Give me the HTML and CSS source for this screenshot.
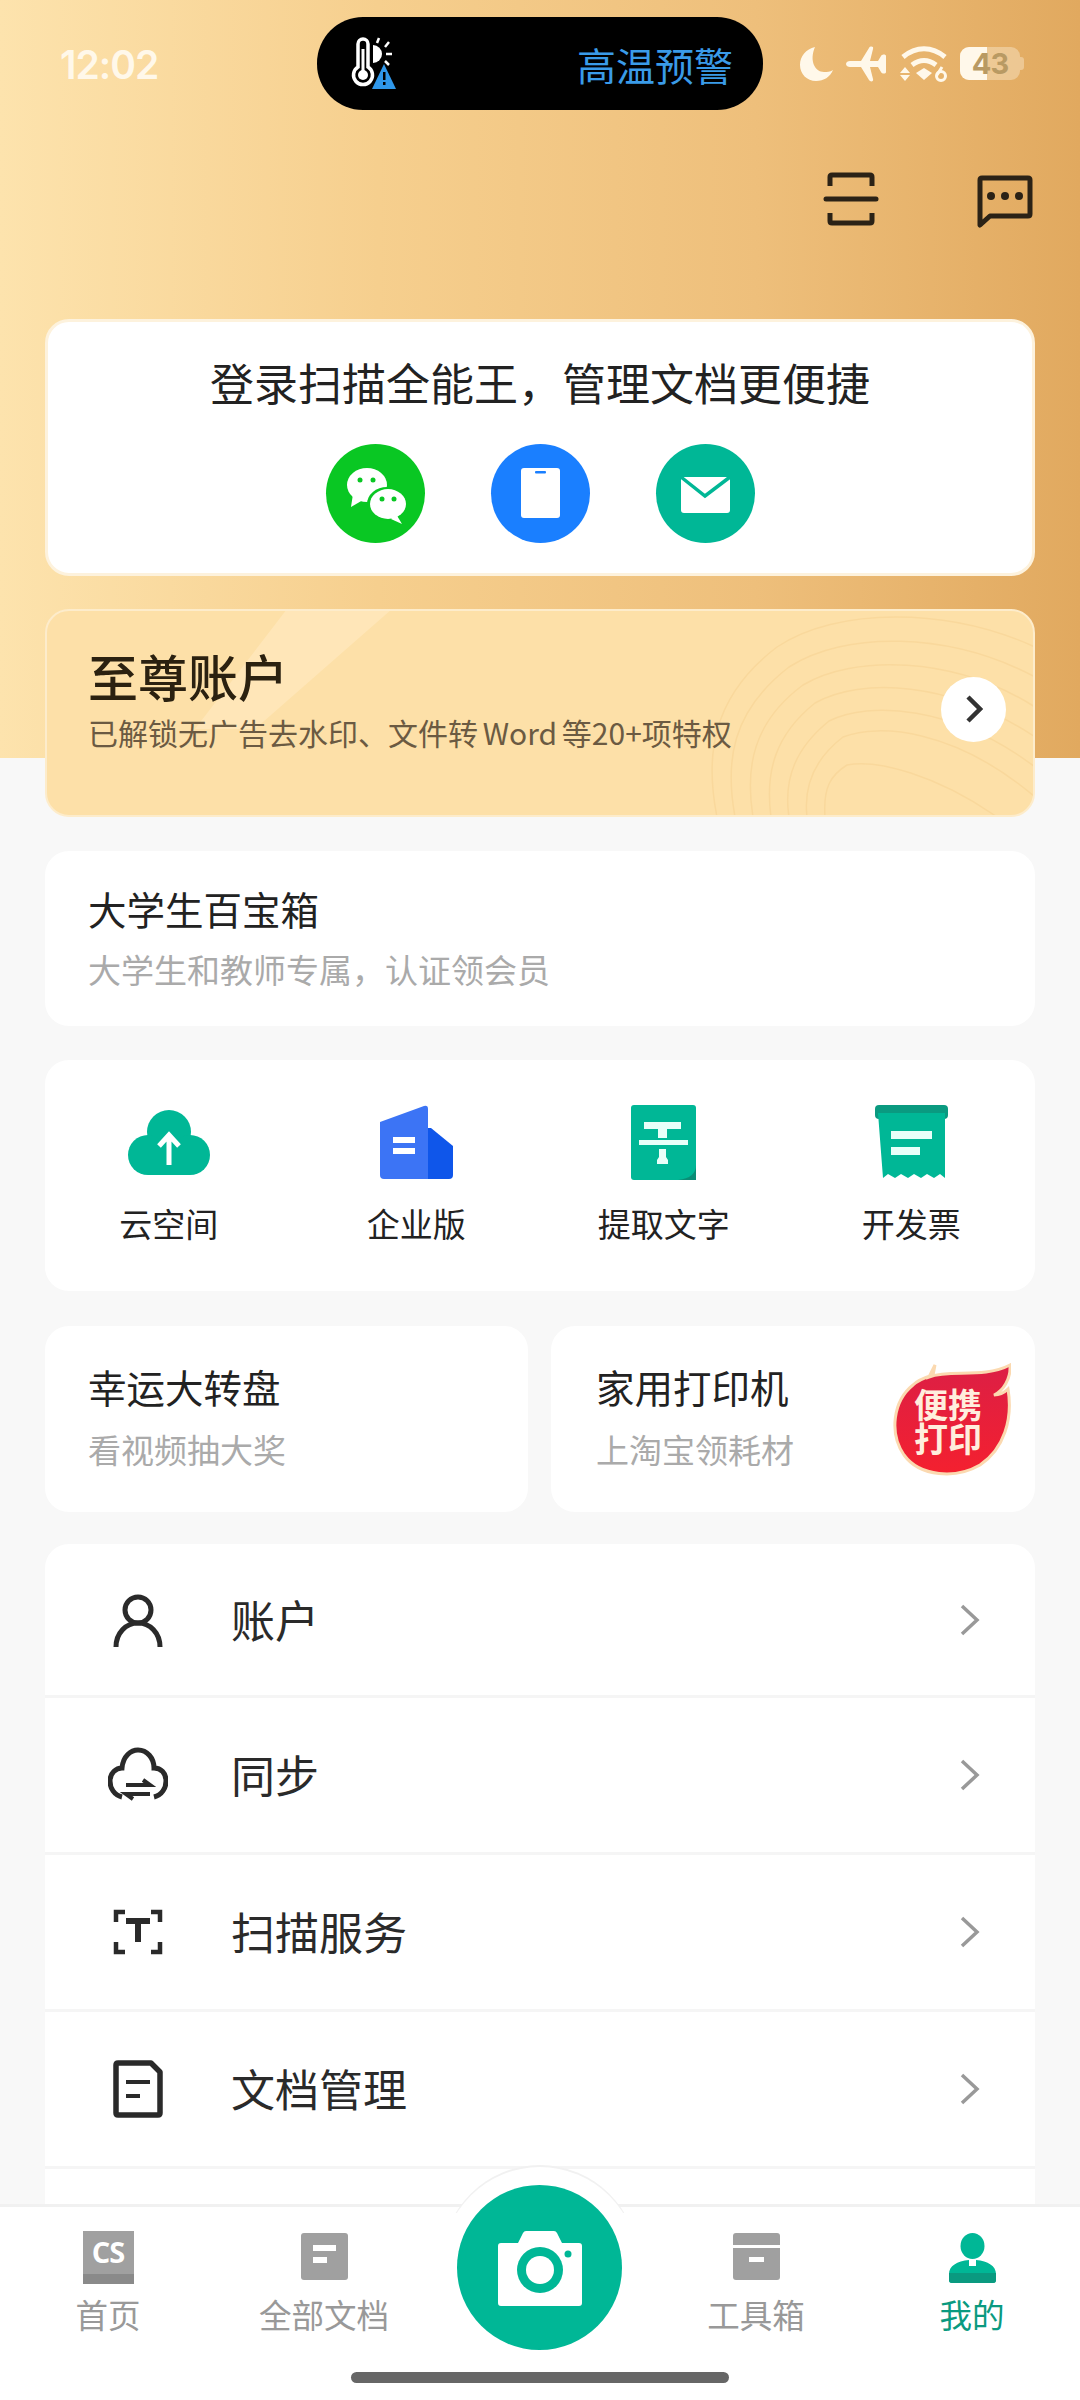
FILE: index.html
```html
<!DOCTYPE html>
<html lang="zh-CN">
<head>
<meta charset="UTF-8">
<title>扫描全能王</title>
<link rel="stylesheet" href="styles.css">
</head>
<body>
<div class="page">

  <div class="status">
    <span class="time">12:02</span>
    <div class="pill">
      <svg class="pill-icon" width="46" height="54" viewBox="0 0 46 54">
        <path d="M7 30V7a5 5 0 0 1 10 0v23a9.500 9.500 0 1 1-10 0z" fill="none" stroke="#fff" stroke-width="3.500"/>
        <circle cx="12" cy="38" r="5" fill="#fff"/>
        <rect x="10.500" y="12" width="3" height="24" fill="#fff"/>
        <path d="M22 8a9 9 0 0 1 0 18z" fill="#fff"/>
        <path d="M28 1l-2 5M38 5l-4 5M41 17h-6M38 28l-4-4" stroke="#fff" stroke-width="2.500" fill="none"/>
        <path d="M33 27l12 25H21z" fill="#2f97ea"/>
        <rect x="32" y="35" width="2.500" height="8" fill="#000"/>
        <rect x="32" y="45" width="2.500" height="3" fill="#000"/>
      </svg>
      <span class="pill-text">高温预警</span>
    </div>
    <div class="status-icons">
      <svg width="34" height="36" viewBox="0 0 34 36"><path d="M15 1C6 3 0 10 0 19c0 9 7 16 16 16 8 0 14-4 17-11-3 2-6 2-9 2C15 26 9 15 15 1z" fill="#fff8ea"/></svg>
      <svg width="42" height="36" viewBox="0 0 42 36"><path d="M0 18c0-2 2-3 4-3h11l8-13c1-2 5-2 4 1l-3 12h8l3-5c1-2 5-2 5 0v16c0 2-4 2-5 0l-3-5h-8l3 12c1 3-3 3-4 1l-8-13H4c-2 0-4-1-4-3z" fill="#fff8ea"/></svg>
      <svg width="48" height="36" viewBox="0 0 48 36">
        <path d="M3 11C16 0 32 0 45 11M12 19c8-6 16-6 24 0" fill="none" stroke="#fff8ea" stroke-width="5"/>
        <path d="M24 22l8 5-8 7-8-7z" fill="#fff8ea"/>
        <path d="M5 21l5 6H0zM0 29h10l-5 6z" fill="#fff8ea"/>
        <circle cx="41" cy="30" r="4.500" fill="none" stroke="#fff8ea" stroke-width="3"/>
        <path d="M37 29l5-8" stroke="#fff8ea" stroke-width="3"/>
      </svg>
      <div class="battery"><span class="battery-fill"></span><span class="battery-num">43</span></div>
    </div>
  </div>

  <div class="topbar">
    <svg width="56" height="54" viewBox="0 0 56 54" fill="none" stroke="#2b2216" stroke-width="5">
      <path d="M7 14V5q0-2 2-2h38q2 0 2 2v9"/>
      <path d="M3 27h50" stroke-linecap="round"/>
      <path d="M7 41v8q0 2 2 2h38q2 0 2-2v-8"/>
    </svg>
    <svg class="msg-icon" width="56" height="54" viewBox="0 0 56 54">
      <path d="M3 50V5q0-2 2-2h46q2 0 2 2v34q0 2-2 2H13z" fill="none" stroke="#2b2216" stroke-width="5" stroke-linejoin="round"/>
      <circle cx="14" cy="21" r="4" fill="#2b2216"/>
      <circle cx="28" cy="21" r="4" fill="#2b2216"/>
      <circle cx="42" cy="21" r="4" fill="#2b2216"/>
    </svg>
  </div>

  <div class="login card">
    <div class="login-title">登录扫描全能王，管理文档更便捷</div>
    <div class="login-ways">
      <div class="way way-wechat">
        <svg width="99" height="99" viewBox="0 0 99 99">
          <ellipse cx="41" cy="41" rx="20" ry="17" fill="#fff"/>
          <path d="M27 50l-2 13 12-7z" fill="#fff"/>
          <ellipse cx="61" cy="60" rx="20" ry="17" fill="#09c723"/>
          <ellipse cx="62" cy="60" rx="18" ry="15" fill="#fff"/>
          <path d="M70 70l6 10-11-5z" fill="#fff"/>
          <circle cx="34" cy="36" r="2.500" fill="#09c723"/>
          <circle cx="47" cy="36" r="2.500" fill="#09c723"/>
          <circle cx="56" cy="55" r="2.500" fill="#09c723"/>
          <circle cx="68" cy="55" r="2.500" fill="#09c723"/>
        </svg>
      </div>
      <div class="way way-phone">
        <svg width="99" height="99" viewBox="0 0 99 99">
          <rect x="30" y="24" width="39" height="50" rx="3" fill="#fff"/>
          <rect x="44" y="27" width="11" height="2.500" rx="1" fill="#1a7fff"/>
        </svg>
      </div>
      <div class="way way-mail">
        <svg width="99" height="99" viewBox="0 0 99 99">
          <rect x="25" y="33" width="49" height="36" rx="3" fill="#fff"/>
          <path d="M25 33l24 19 25-19" fill="none" stroke="#00b796" stroke-width="3.500"/>
        </svg>
      </div>
    </div>
  </div>

  <div class="premium card">
    <svg class="premium-art" width="990" height="208" viewBox="0 0 990 208" fill="none">
      <path d="M242 0h105L210 120H150z" fill="#ffe6b8"/>
      <g stroke="#f9d89c" stroke-width="1.500">
        <path d="M672 208c-12-60-6-120 60-170 60-40 170-40 258 0"/>
        <path d="M690 208c-10-55-4-105 54-150 55-36 160-36 246 10"/>
        <path d="M708 208c-8-50 0-95 50-132 50-30 150-30 232 22"/>
        <path d="M726 208c-6-45 4-82 44-114 46-26 136-22 220 34"/>
        <path d="M744 208c-6-40 8-70 40-96 40-20 124-16 206 46"/>
        <path d="M762 208c-4-35 10-60 36-80 36-14 112-8 192 60"/>
        <path d="M780 208c-2-30 6-42 22-52 30-6 90 10 150 52"/>
      </g>
    </svg>
    <div class="premium-text">
      <div class="premium-title">至尊账户</div>
      <div class="premium-sub">已解锁无广告去水印、文件转 Word 等20+项特权</div>
    </div>
    <div class="premium-go">
      <svg width="18" height="30" viewBox="0 0 18 30"><path d="M3 3l12 12L3 27" fill="none" stroke="#333" stroke-width="4.500"/></svg>
    </div>
  </div>

  <div class="student card">
    <div class="name">大学生百宝箱</div>
    <div class="hint">大学生和教师专属，认证领会员</div>
  </div>

  <div class="tools card">
    <div class="tool">
      <svg width="84" height="75" viewBox="0 0 84 75">
        <circle cx="42" cy="27" r="22" fill="#00b796"/>
        <circle cx="21" cy="50" r="20" fill="#00b796"/>
        <circle cx="63" cy="50" r="20" fill="#00b796"/>
        <rect x="21" y="40" width="42" height="30" fill="#00b796"/>
        <path d="M42 60V31M32 41l10-11 10 11" fill="none" stroke="#fff" stroke-width="5"/>
      </svg>
      <span class="tool-name">云空间</span>
    </div>
    <div class="tool">
      <svg width="73" height="75" viewBox="0 0 73 75">
        <path d="M48 74V23h3l22 18v29q0 4-4 4z" fill="#0f56ea"/>
        <path d="M0 17L44 1q4-1 4 3v70H4q-4 0-4-4z" fill="#3c74f5"/>
        <rect x="13" y="32" width="22" height="6" fill="#fff"/>
        <rect x="13" y="43" width="22" height="6" fill="#fff"/>
      </svg>
      <span class="tool-name">企业版</span>
    </div>
    <div class="tool">
      <svg width="65" height="75" viewBox="0 0 65 75">
        <path d="M3 0h59q3 0 3 3v72H3q-3 0-3-3V3q0-3 3-3z" fill="#00b796"/>
        <path d="M65 60v15H47q18-2 18-15z" fill="#0a8d76"/>
        <path d="M13 17h37v7H36v9h-9v-9H13z" fill="#e8fff9"/>
        <rect x="8" y="35" width="49" height="5" fill="#e8fff9"/>
        <path d="M28 44h7v8l2 3v4H26v-4l2-3z" fill="#e8fff9"/>
      </svg>
      <span class="tool-name">提取文字</span>
    </div>
    <div class="tool">
      <svg width="73" height="75" viewBox="0 0 73 75">
        <rect x="0" y="0" width="73" height="14" rx="4" fill="#0a9a80"/>
        <path d="M3 8h67v65l-5-4-6 4-7-4-6 4-7-4-6 4-7-4-6 4-7-4-5 4z" fill="#00b796"/>
        <rect x="16" y="26" width="41" height="8" fill="#e8fff9"/>
        <rect x="16" y="42" width="29" height="8" fill="#e8fff9"/>
      </svg>
      <span class="tool-name">开发票</span>
    </div>
  </div>

  <div class="promo-row">
    <div class="promo promo-left card">
      <div class="name">幸运大转盘</div>
      <div class="hint">看视频抽大奖</div>
    </div>
    <div class="promo card">
      <div class="name">家用打印机</div>
      <div class="hint">上淘宝领耗材</div>
      <div class="flame">
        <svg width="118" height="114" viewBox="0 0 118 114">
          <defs>
            <linearGradient id="flameRed" x1="0" y1="0" x2="0" y2="1">
              <stop offset="0" stop-color="#dc1f45"/>
              <stop offset="1" stop-color="#f4202f"/>
            </linearGradient>
          </defs>
          <path d="M42 2L36 14C58 6 90 16 117 2c1 14-7 26-16 30 6 0 10-2 14-6 5 30-4 60-28 76-24 14-60 12-76-10C-4 70 0 38 20 22c6-6 14-8 20-10z" fill="url(#flameRed)" stroke="#fbd9b0" stroke-width="3"/>
        </svg>
        <span class="flame-text">便携<br>打印</span>
      </div>
    </div>
  </div>

  <div class="menu card">
    <div class="menu-row">
      <svg class="menu-icon" width="60" height="60" viewBox="0 0 60 60" fill="none" stroke="#2a2a2a" stroke-width="5">
        <circle cx="30" cy="20" r="13"/>
        <path d="M8 57C8 43 18 33 30 33s22 10 22 24"/>
      </svg>
      <span class="menu-name">账户</span>
      <svg class="menu-go" width="22" height="34" viewBox="0 0 22 34"><path d="M3 3l15 14L3 31" fill="none" stroke="#999" stroke-width="3.500"/></svg>
    </div>
    <div class="menu-row">
      <svg class="menu-icon" width="60" height="60" viewBox="0 0 60 60" fill="none" stroke="#2a2a2a" stroke-width="5">
        <path d="M14 52C6 50 2 43 2 36c0-8 6-13 12-13C15 11 23 5 30 5c9 0 16 8 16 18 7 0 12 5 12 13 0 7-4 14-12 16"/>
        <path d="M18 40h24l-7-5M42 49H18l7 5" stroke-width="4"/>
      </svg>
      <span class="menu-name">同步</span>
      <svg class="menu-go" width="22" height="34" viewBox="0 0 22 34"><path d="M3 3l15 14L3 31" fill="none" stroke="#999" stroke-width="3.500"/></svg>
    </div>
    <div class="menu-row">
      <svg class="menu-icon" width="60" height="60" viewBox="0 0 60 60" fill="none" stroke="#2a2a2a" stroke-width="4.500">
        <path d="M17 10H8v10M43 10h9v10M17 50H8V40M43 50h9V40"/>
        <path d="M18 19h24M30 19v21" stroke-width="6"/>
      </svg>
      <span class="menu-name">扫描服务</span>
      <svg class="menu-go" width="22" height="34" viewBox="0 0 22 34"><path d="M3 3l15 14L3 31" fill="none" stroke="#999" stroke-width="3.500"/></svg>
    </div>
    <div class="menu-row">
      <svg class="menu-icon" width="60" height="60" viewBox="0 0 60 60" fill="none" stroke="#2a2a2a" stroke-width="5.500">
        <path d="M8 6q0-2 2-2h33l9 9v41q0 2-2 2H10q-2 0-2-2z" stroke-linejoin="round"/>
        <path d="M18 23h24M18 37h14" stroke-width="4"/>
      </svg>
      <span class="menu-name">文档管理</span>
      <svg class="menu-go" width="22" height="34" viewBox="0 0 22 34"><path d="M3 3l15 14L3 31" fill="none" stroke="#999" stroke-width="3.500"/></svg>
    </div>
    <div class="menu-row"></div>
  </div>

  <div class="nav">
    <div class="halo"></div>
    <div class="tabs">
      <div class="tab">
        <div class="tab-icon cs-icon"><span class="cs-text">CS</span></div>
        <span class="tab-name">首页</span>
      </div>
      <div class="tab">
        <div class="tab-icon">
          <svg width="47" height="47" viewBox="0 0 47 47">
            <rect width="47" height="47" rx="3" fill="#a0a0a0"/>
            <rect x="12" y="12" width="23" height="6" fill="#fff"/>
            <rect x="12" y="24" width="14" height="6" fill="#fff"/>
          </svg>
        </div>
        <span class="tab-name">全部文档</span>
      </div>
      <div class="tab tab-camera">
        <div class="camera">
          <svg width="84" height="76" viewBox="0 0 84 76">
            <path d="M3 13h17L25 3q1-2 3-2h28q2 0 3 2l5 10h17q3 0 3 3v57q0 3-3 3H3q-3 0-3-3V16q0-3 3-3z" fill="#fff"/>
            <circle cx="42" cy="40" r="23" fill="#00b796"/>
            <circle cx="42" cy="40" r="14" fill="#fff"/>
            <circle cx="70" cy="24" r="3.500" fill="#00b796"/>
          </svg>
        </div>
      </div>
      <div class="tab">
        <div class="tab-icon">
          <svg width="47" height="47" viewBox="0 0 47 47">
            <path d="M3 0h41q3 0 3 3v9H0V3q0-3 3-3z" fill="#a0a0a0"/>
            <path d="M0 15h47v29q0 3-3 3H3q-3 0-3-3z" fill="#a0a0a0"/>
            <rect x="16" y="24" width="15" height="5" fill="#fff"/>
          </svg>
        </div>
        <span class="tab-name">工具箱</span>
      </div>
      <div class="tab tab-on">
        <div class="tab-icon">
          <svg width="47" height="50" viewBox="0 0 47 50">
            <ellipse cx="23.500" cy="13" rx="12" ry="13" fill="#00b796"/>
            <path d="M0 47V41c0-8 8-13 20-14v6h7v-6c12 1 20 6 20 14v6q0 3-3 3H3q-3 0-3-3z" fill="#00b796"/>
            <path d="M0 40h47v7q0 3-3 3H3q-3 0-3-3z" fill="#0a9a80"/>
          </svg>
        </div>
        <span class="tab-name">我的</span>
      </div>
    </div>
    <div class="home-bar"></div>
  </div>

</div>
</body>
</html>
```

FILE: styles.css
```css
* {
  box-sizing: border-box;
}

body {
  margin: 0;
  font-family: "Noto Sans CJK SC", sans-serif;
  color: #222;
}

.page {
  position: relative;
  width: 1080px;
  height: 2400px;
  overflow: hidden;
  padding: 17px 45px 0;
  background:
    linear-gradient(90deg, #fde3ad 0%, #f6cf8e 35%, #eebf7b 70%, #e1a95f 100%) 0 0 / 100% 758px no-repeat,
    #f8f8f8;
}

.card {
  background: #fff;
  border-radius: 24px;
}

/* status bar */
.status {
  display: flex;
  align-items: center;
  height: 93px;
  margin: 0 -45px;
  padding-left: 60px;
}

.time {
  width: 257px;
  margin-top: 2px;
  font-family: "Inter", sans-serif;
  font-size: 39px;
  font-weight: 600;
  letter-spacing: -1px;
  color: #fff8ea;
}

.pill {
  display: flex;
  align-items: center;
  justify-content: space-between;
  width: 446px;
  height: 93px;
  padding: 0 30px 0 34px;
  background: #000;
  border-radius: 46px;
}

.pill-text {
  font-size: 39px;
  color: #3a9be8;
}

.status-icons {
  display: flex;
  align-items: center;
  gap: 12px;
  margin-left: 37px;
}

.battery {
  position: relative;
  width: 60px;
  height: 33px;
  border-radius: 9px;
  background: rgba(255, 248, 234, 0.35);
  text-align: center;
}

.battery::after {
  content: "";
  position: absolute;
  right: -4px;
  top: 10px;
  width: 4px;
  height: 13px;
  border-radius: 0 3px 3px 0;
  background: rgba(255, 248, 234, 0.35);
}

.battery-fill {
  position: absolute;
  left: 0;
  top: 0;
  width: 27px;
  height: 33px;
  background: #fff8ea;
  border-radius: 9px 0 0 9px;
}

.battery-num {
  position: relative;
  font-family: "Inter", sans-serif;
  font-size: 29px;
  font-weight: 700;
  line-height: 33px;
  letter-spacing: -1px;
  color: #b99a63;
}

/* top icons */
.topbar {
  display: flex;
  justify-content: flex-end;
  gap: 98px;
  height: 209px;
  padding-top: 62px;
  margin-right: 2px;
}

.msg-icon {
  margin-top: 3px;
}

/* login */
.login {
  height: 257px;
  padding-top: 30px;
  border: 3px solid #fdf2dd;
  text-align: center;
}

.login-title {
  font-size: 44px;
  line-height: 60px;
}

.login-ways {
  display: flex;
  justify-content: center;
  gap: 66px;
  margin-top: 32px;
}

.way {
  width: 99px;
  height: 99px;
  border-radius: 50%;
}

.way-wechat {
  background: #09c723;
}

.way-phone {
  background: #1a7fff;
}

.way-mail {
  background: #00b796;
}

.way svg {
  display: block;
}

/* premium */
.premium {
  position: relative;
  display: flex;
  align-items: center;
  justify-content: space-between;
  height: 208px;
  margin-top: 33px;
  padding: 0 27px 0 41px;
  overflow: hidden;
  border: 2px solid #fdeccb;
  background: #fde0a8;
}

.premium-art {
  position: absolute;
  left: -2px;
  top: -2px;
}

.premium-text {
  position: relative;
  margin-top: -33px;
}

.premium-title {
  font-size: 50px;
  font-weight: 500;
  line-height: 70px;
  color: #2b2110;
}

.premium-sub {
  font-size: 30px;
  line-height: 44px;
  color: #6b5a42;
  word-spacing: -2px;
}

.premium-go {
  position: relative;
  display: flex;
  align-items: center;
  justify-content: center;
  width: 65px;
  height: 65px;
  margin-top: -8px;
  border-radius: 50%;
  background: #fff;
}

/* text cards */
.student {
  height: 175px;
  margin-top: 34px;
  padding: 30px 43px 0;
}

.name {
  font-size: 38.500px;
  line-height: 54px;
  color: #222;
}

.hint {
  margin-top: 11px;
  font-size: 33px;
  line-height: 46px;
  color: #aaa;
}

.tools {
  display: grid;
  grid-template-columns: repeat(4, 1fr);
  height: 231px;
  margin-top: 34px;
  padding-top: 45px;
}

.tool {
  display: flex;
  flex-direction: column;
  align-items: center;
}

.tool-name {
  margin-top: 20px;
  font-size: 33px;
  line-height: 46px;
}

.promo-row {
  display: grid;
  grid-template-columns: 483px 484px;
  gap: 23px;
  margin-top: 35px;
}

.promo {
  position: relative;
  height: 186px;
  padding: 33px 45px 0;
}

.promo-left {
  padding-left: 43px;
}

.promo .hint {
  margin-top: 13px;
}

.flame {
  position: absolute;
  left: 342px;
  top: 37px;
  width: 118px;
  height: 114px;
}

.flame svg {
  display: block;
}

.flame-text {
  position: absolute;
  left: 21px;
  top: 24px;
  font-size: 34px;
  font-weight: 700;
  line-height: 34px;
  color: #ffeedd;
}

/* menu */
.menu {
  margin-top: 32px;
  border-radius: 24px 24px 0 0;
}

.menu-row {
  display: flex;
  align-items: center;
  height: 157px;
  padding: 0 54px 0 63px;
  border-bottom: 3px solid #f5f5f5;
}

.menu-row:first-child {
  height: 154px;
}

.menu-name {
  flex: 1;
  margin-left: 63px;
  margin-top: -2px;
  font-size: 44px;
  line-height: 60px;
  color: #2a2a2a;
}

/* bottom navigation */
.nav {
  position: absolute;
  left: 0;
  right: 0;
  bottom: 0;
  height: 196px;
  padding-top: 24px;
  background: #fff;
  border-top: 3px solid #f1f1f1;
}

.halo {
  position: absolute;
  left: 442px;
  top: -40px;
  width: 196px;
  height: 196px;
  border-radius: 50%;
  background: #fff;
  box-shadow: 0 -2px 0 #f1f1f1;
  clip-path: inset(-5px -5px 150px -5px);
}

.tabs {
  position: relative;
  display: grid;
  grid-template-columns: repeat(5, 1fr);
  height: 141px;
}

.tab {
  display: flex;
  flex-direction: column;
  align-items: center;
}

.tab-icon {
  display: flex;
  align-items: flex-start;
  justify-content: center;
  height: 53px;
  margin-bottom: 8px;
}

.tab-icon svg {
  display: block;
  margin-top: 2px;
}

.cs-icon {
  width: 51px;
  height: 53px;
  background: linear-gradient(#a0a0a0 0 81%, #8a8a8a 81%);
}

.cs-text {
  font-family: "Open Sans", sans-serif;
  font-size: 29px;
  font-weight: 700;
  line-height: 42px;
  letter-spacing: -1px;
  color: #fff;
}

.tab-name {
  font-size: 32.500px;
  line-height: 44px;
  color: #999;
}

.tab-on .tab-name {
  color: #0a9a80;
}

.tab-camera {
  position: relative;
}

.camera {
  position: absolute;
  left: 25px;
  top: -46px;
  display: flex;
  align-items: center;
  justify-content: center;
  width: 165px;
  height: 165px;
  border-radius: 50%;
  background: #00b796;
}

.home-bar {
  width: 378px;
  height: 11px;
  margin: 0 auto;
  border-radius: 6px;
  background: #666;
}
```
